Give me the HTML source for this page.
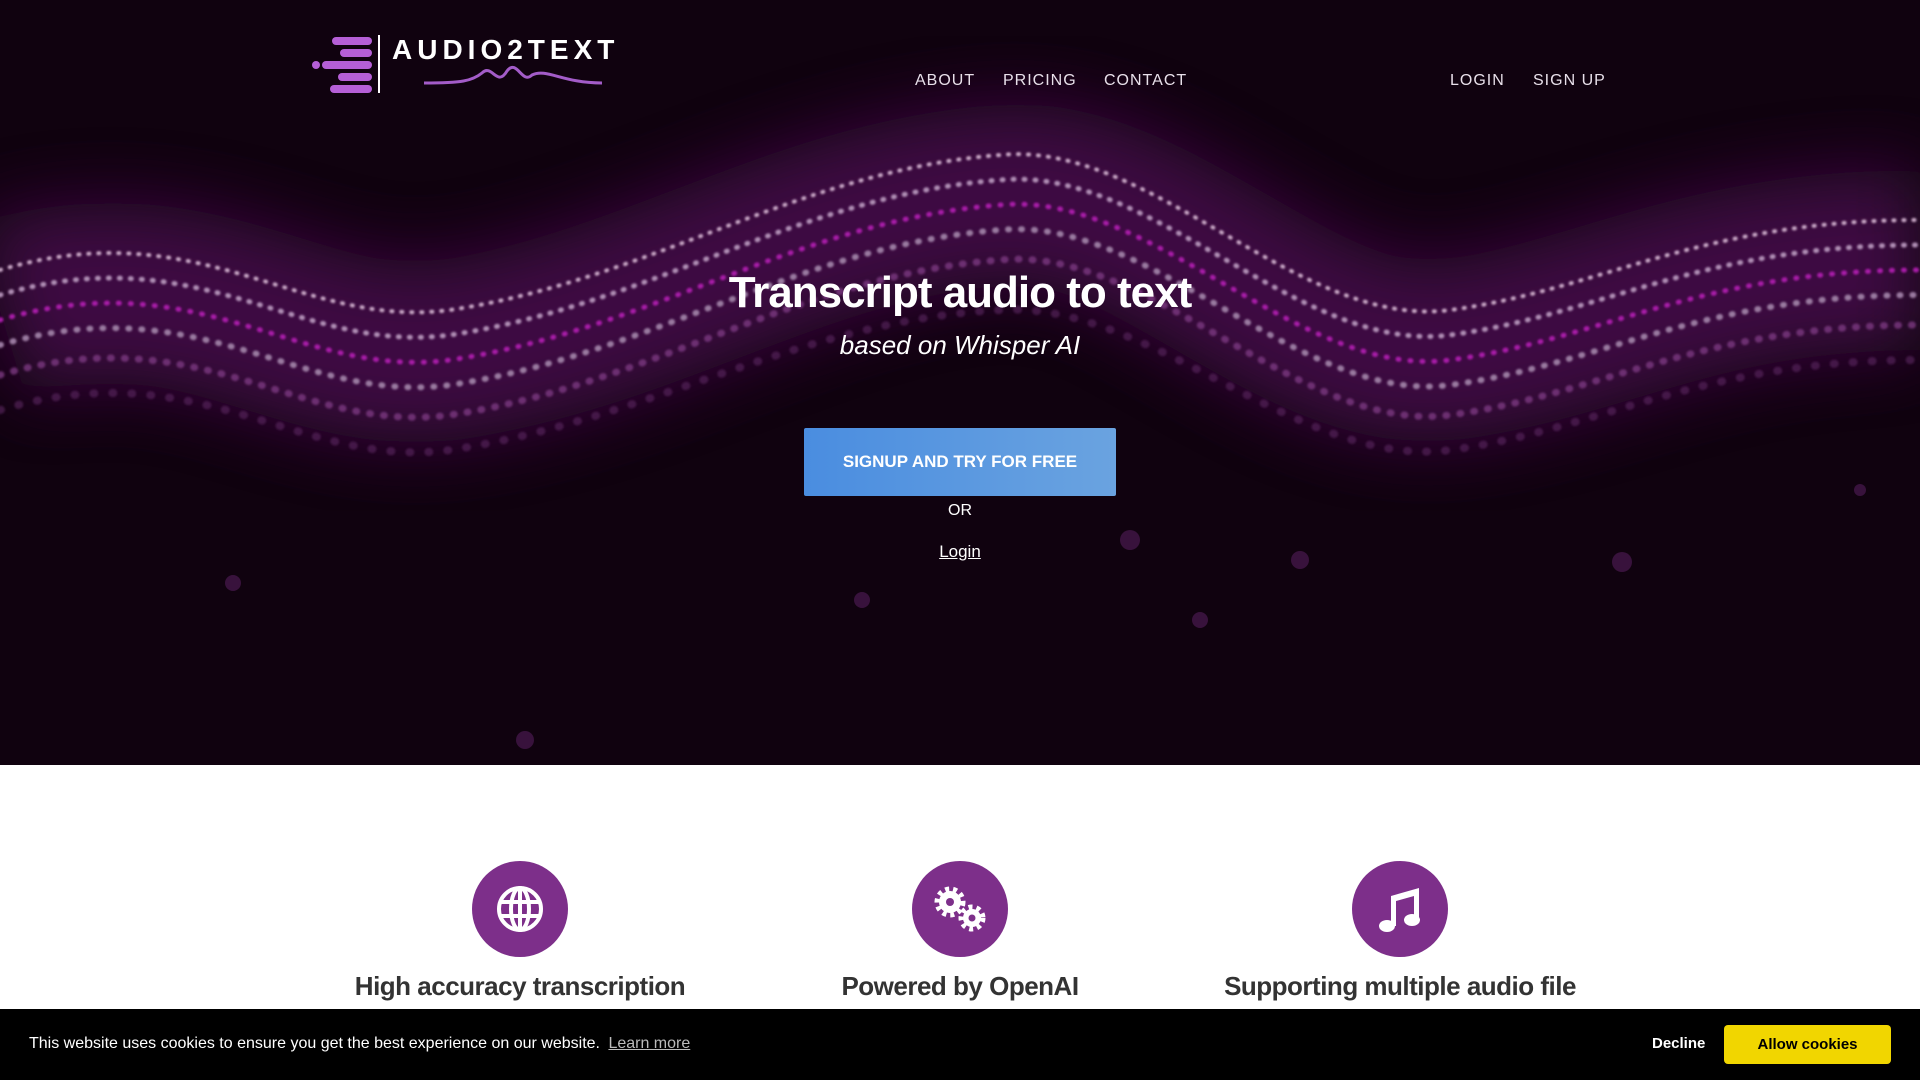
<!DOCTYPE html>
<html><head><meta charset="utf-8"><style>
*{margin:0;padding:0;box-sizing:border-box}
body{width:1920px;height:1080px;overflow:hidden;font-family:"Liberation Sans",sans-serif;background:#fff;position:relative}
.hero{position:absolute;left:0;top:0;width:1920px;height:765px;background:#10020f;overflow:hidden}
.hero svg.bg{position:absolute;left:0;top:0}
.nav a{position:absolute;top:72px;color:#e8e0ea;font-size:16px;letter-spacing:1px;text-decoration:none}
h1{position:absolute;top:268px;width:100%;text-align:center;color:#fff;font-size:44px;font-weight:bold;letter-spacing:-1px}
.sub{position:absolute;top:330px;width:100%;text-align:center;color:#fff;font-size:26px;font-style:italic}
.btn{position:absolute;left:804px;top:428px;width:312px;height:68px;background:linear-gradient(90deg,#4a8de0,#6aa3e0);color:#fff;font-weight:bold;font-size:17px;display:flex;align-items:center;justify-content:center;border-radius:2px}
.or{position:absolute;top:502px;width:100%;text-align:center;color:#fff;font-size:16px}
.login{position:absolute;top:542px;width:100%;text-align:center;color:#fff;font-size:17px;text-decoration:underline}
.circ{position:absolute;top:861px;width:96px;height:96px;border-radius:50%;background:#7d2f8a;display:flex;align-items:center;justify-content:center}
.ft{position:absolute;top:970px;width:400px;text-align:center;color:#333;font-size:26px;font-weight:bold;letter-spacing:-0.5px;line-height:32px}
.cookie{position:absolute;left:0;top:1009px;width:1920px;height:71px;background:#000;color:#fff;font-size:16px}
</style></head><body>
<div class="hero">
<svg class="bg" width="1920" height="765" viewBox="0 0 1920 765">
<defs><filter id="b" x="-50%" y="-100%" width="200%" height="300%"><feGaussianBlur stdDeviation="35"/></filter><filter id="s"><feGaussianBlur stdDeviation="1"/></filter></defs>
<path d="M0 310 C200 250 300 370 450 350 C650 320 800 210 1000 195 C1150 180 1300 370 1450 350 C1600 330 1700 260 1920 260" stroke="#4a1050" stroke-width="180" fill="none" filter="url(#b)" opacity="0.8"/>
<g fill="none" stroke-linecap="round" filter="url(#s)">
<path d="M0 270 C200 210 300 330 450 310 C650 280 800 170 1000 155 C1150 140 1300 330 1450 310 C1600 290 1700 220 1920 220" stroke="#c9a8c6" stroke-width="4" stroke-dasharray="1 9"/>
<path d="M0 295 C200 235 300 355 450 335 C650 305 800 195 1000 180 C1150 165 1300 355 1450 335 C1600 315 1700 245 1920 245" stroke="#b08fb5" stroke-width="5" stroke-dasharray="1 10"/>
<path d="M0 320 C200 260 300 380 450 360 C650 330 800 220 1000 205 C1150 190 1300 380 1450 360 C1600 340 1700 270 1920 270" stroke="#a81aa8" stroke-width="5" stroke-dasharray="1 11"/>
<path d="M0 345 C200 285 300 405 450 385 C650 355 800 245 1000 230 C1150 215 1300 405 1450 385 C1600 365 1700 295 1920 295" stroke="#9a7aa0" stroke-width="6" stroke-dasharray="1 12"/>
<path d="M0 375 C200 315 300 435 450 415 C650 385 800 275 1000 260 C1150 245 1300 435 1450 415 C1600 395 1700 325 1920 325" stroke="#7a3a80" stroke-width="7" stroke-dasharray="1 13" opacity="0.8"/>
<path d="M0 410 C200 350 300 470 450 450 C650 420 800 320 1000 310 C1150 300 1300 470 1450 450 C1600 430 1700 360 1920 360" stroke="#5a2a60" stroke-width="8" stroke-dasharray="1 18" opacity="0.6"/>
</g>
<g fill="#4a1a50" opacity="0.7"><circle cx="233" cy="583" r="8"/><circle cx="525" cy="740" r="9"/><circle cx="862" cy="600" r="8"/><circle cx="1130" cy="540" r="10"/><circle cx="1300" cy="560" r="9"/><circle cx="1622" cy="562" r="10"/><circle cx="1030" cy="470" r="9"/><circle cx="1860" cy="490" r="6"/><circle cx="1200" cy="620" r="8"/></g>
</svg>
<svg style="position:absolute;left:312px;top:33px" width="312" height="62" viewBox="0 0 312 62">
<g fill="#b55fd6">
<rect x="20" y="4" width="40" height="8" rx="4"/><rect x="28" y="16" width="32" height="8" rx="4"/><rect x="10" y="28" width="50" height="8" rx="4"/><rect x="26" y="40" width="34" height="8" rx="4"/><rect x="18" y="52" width="42" height="8" rx="4"/><circle cx="4" cy="32" r="4"/></g>
<rect x="66" y="2" width="2" height="58" fill="#fff"/>
<text x="80" y="26" fill="#fff" font-family="Liberation Sans" font-weight="bold" font-size="28" letter-spacing="5">AUDIO2TEXT</text>
<path d="M112 50 C150 50 160 48 170 40 C180 30 185 55 195 38 C205 25 210 52 220 42 C235 35 250 50 290 50" stroke="#a35cc8" stroke-width="3" fill="none"/>
</svg>
<div class="nav"><a style="left:915px">ABOUT</a><a style="left:1003px">PRICING</a><a style="left:1104px">CONTACT</a><a style="left:1450px">LOGIN</a><a style="left:1533px">SIGN UP</a></div>
<h1>Transcript audio to text</h1>
<div class="sub">based on Whisper AI</div>
<div class="btn">SIGNUP AND TRY FOR FREE</div>
<div class="or">OR</div>
<div class="login">Login</div>
</div>
<div class="circ" style="left:472px"><svg width="50" height="50" viewBox="0 0 50 50" fill="none" stroke="#fff" stroke-width="4"><circle cx="25" cy="25" r="21"/><ellipse cx="25" cy="25" rx="9" ry="21"/><path d="M4 18H46M4 32H46M25 4V46"/></svg></div>
<div class="circ" style="left:912px"><svg width="60" height="50" viewBox="0 0 60 50"><g fill="#fff"><circle cx="20" cy="18" r="11"/><circle cx="42" cy="34" r="9"/></g><g stroke="#fff" stroke-width="5" stroke-dasharray="4 4"><circle cx="20" cy="18" r="13" fill="none"/><circle cx="42" cy="34" r="11" fill="none"/></g><circle cx="20" cy="18" r="4" fill="#7d2f8a"/><circle cx="42" cy="34" r="3.5" fill="#7d2f8a"/></svg></div>
<div class="circ" style="left:1352px"><svg width="50" height="50" viewBox="0 0 50 50" fill="#fff"><path d="M16 12L44 4V36H39V12L21 17V42H16Z"/><ellipse cx="12" cy="42" rx="8" ry="6"/><ellipse cx="37" cy="36" rx="8" ry="6"/></svg></div>
<div class="ft" style="left:320px">High accuracy transcription</div>
<div class="ft" style="left:760px">Powered by OpenAI</div>
<div class="ft" style="left:1200px">Supporting multiple audio file</div>
<div class="cookie">
<span style="position:absolute;left:29px;top:26px">This website uses cookies to ensure you get the best experience on our website. <span style="text-decoration:underline;color:#bbb;margin-left:4px">Learn more</span></span>
<span style="position:absolute;left:1652px;top:26px;font-weight:bold;font-size:15px">Decline</span>
<div style="position:absolute;left:1724px;top:16px;width:167px;height:39px;background:#f1d600;color:#000;font-weight:bold;font-size:15px;display:flex;align-items:center;justify-content:center;border-radius:4px">Allow cookies</div>
</div>
</body></html>
